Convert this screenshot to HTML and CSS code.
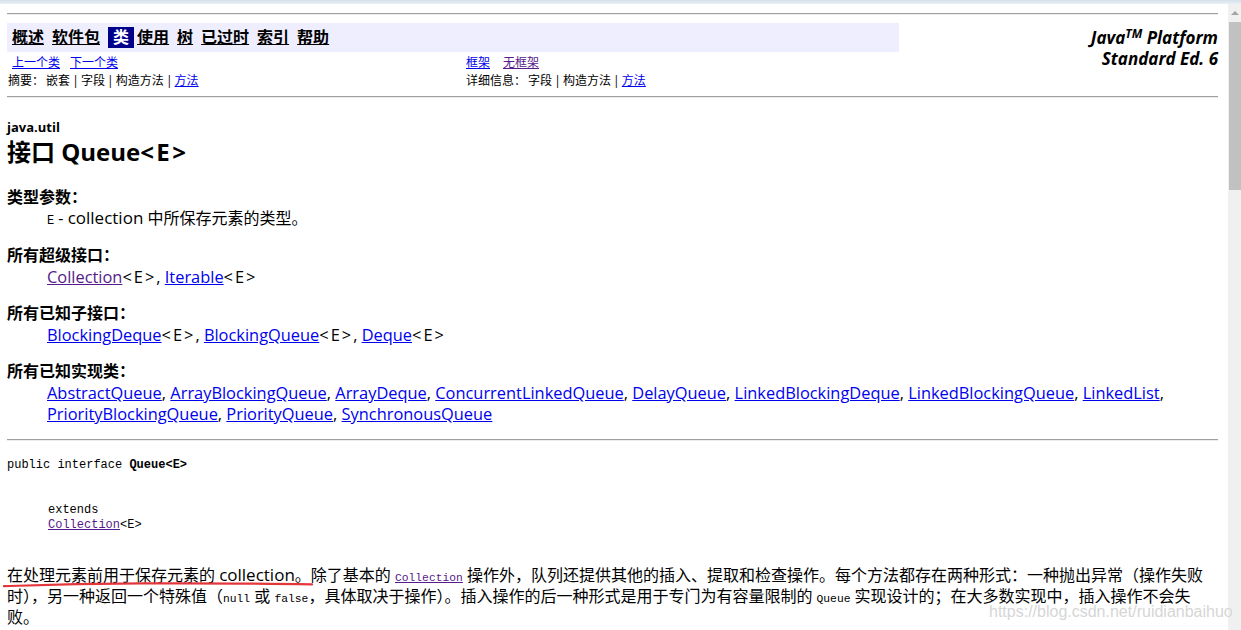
FILE: index.html
```html
<!DOCTYPE html>
<html lang="zh-CN">
<head>
<meta charset="utf-8">
<title>Queue (Java Platform SE 6)</title>
<link rel="stylesheet" href="styles.css">
</head>
<body>
<div class="window-top"></div>
<div class="window">
  <main class="doc">
    <hr class="rule rule-top">
    <header class="header">
      <div class="header-main">
        <nav class="navbar">
          <a class="nav-item" href="#">概述</a>
          <a class="nav-item" href="#">软件包</a>
          <span class="nav-item nav-current">类</span>
          <a class="nav-item" href="#">使用</a>
          <a class="nav-item" href="#">树</a>
          <a class="nav-item" href="#">已过时</a>
          <a class="nav-item" href="#">索引</a>
          <a class="nav-item" href="#">帮助</a>
        </nav>
        <div class="subnav">
          <div class="subnav-cell subnav-prevnext"><a href="#">上一个类</a><a href="#">下一个类</a></div>
          <div class="subnav-cell subnav-frames"><a href="#">框架</a><a class="visited" href="#">无框架</a></div>
          <div class="subnav-cell subnav-summary">摘要： 嵌套 | 字段 | 构造方法 | <a href="#">方法</a></div>
          <div class="subnav-cell">详细信息： 字段 | 构造方法 | <a href="#">方法</a></div>
        </div>
      </div>
      <div class="brand">Java<sup>TM</sup> Platform<br>Standard Ed. 6</div>
    </header>
    <hr class="rule rule-header">

    <div class="pkg">java.util</div>
    <h2 class="title">接口 Queue<span class="tp">&lt;E&gt;</span></h2>

    <dl class="meta meta-first">
      <dt>类型参数：</dt>
      <dd><code class="code">E</code> - <span class="lat">collection</span> 中所保存元素的类型。</dd>
    </dl>
    <dl class="meta">
      <dt>所有超级接口：</dt>
      <dd class="links"><a class="visited" href="#">Collection</a><span class="tp">&lt;E&gt;</span>, <a href="#">Iterable</a><span class="tp">&lt;E&gt;</span></dd>
    </dl>
    <dl class="meta">
      <dt>所有已知子接口：</dt>
      <dd class="links"><a href="#">BlockingDeque</a><span class="tp">&lt;E&gt;</span>, <a href="#">BlockingQueue</a><span class="tp">&lt;E&gt;</span>, <a href="#">Deque</a><span class="tp">&lt;E&gt;</span></dd>
    </dl>
    <dl class="meta">
      <dt>所有已知实现类：</dt>
      <dd class="links"><a href="#">AbstractQueue</a>, <a href="#">ArrayBlockingQueue</a>, <a href="#">ArrayDeque</a>, <a href="#">ConcurrentLinkedQueue</a>, <a href="#">DelayQueue</a>, <a href="#">LinkedBlockingDeque</a>, <a href="#">LinkedBlockingQueue</a>, <a href="#">LinkedList</a>, <a href="#">PriorityBlockingQueue</a>, <a href="#">PriorityQueue</a>, <a href="#">SynchronousQueue</a></dd>
    </dl>
    <hr class="rule rule-body">

    <div class="signature">
      <div>public interface <b>Queue&lt;E&gt;</b></div>
      <div class="extends">
        <div>extends</div>
        <div><a class="visited" href="#">Collection</a>&lt;E&gt;</div>
      </div>
    </div>

    <p class="desc">在处理元素前用于保存元素的 <span class="lat">collection</span>。除了基本的 <a class="visited code-inline" href="#">Collection</a> 操作外，队列还提供其他的插入、提取和检查操作。每个方法都存在两种形式：一种抛出异常（操作失败时），另一种返回一个特殊值（<code class="code-inline">null</code> 或 <code class="code-inline">false</code>，具体取决于操作）。插入操作的后一种形式是用于专门为有容量限制的 <code class="code-inline">Queue</code> 实现设计的；在大多数实现中，插入操作不会失败。</p>
  </main>
  <div class="scrollbar">
    <div class="scroll-arrow"><span class="arrow-up"></span></div>
    <div class="scroll-thumb"></div>
  </div>
</div>
<svg class="markup" width="322" height="10" viewBox="0 0 322 10" aria-hidden="true">
  <path d="M2 6.2 C 30 5.2, 70 3.6, 140 3.4 S 270 3.6, 310 4.4" fill="none" stroke="#e3363b" stroke-width="2.2" stroke-linecap="round"/>
</svg>
<div class="watermark">https://blog.csdn.net/ruidianbaihuo</div>
</body>
</html>
```

FILE: styles.css
```css
html, body {
  margin: 0;
  padding: 0;
}

body {
  width: 1241px;
  height: 630px;
  overflow: hidden;
  position: relative;
  display: flex;
  flex-direction: column;
  background: #ffffff;
  color: #000000;
  font-family: "Open Sans", "Noto Sans CJK SC", sans-serif;
  font-size: 16px;
}

a {
  color: #0000ee;
}

a.visited {
  color: #551a8b;
}

.window-top {
  flex: none;
  height: 4px;
  background: linear-gradient(#d3e0ea, #e9f0f6);
}

.window {
  flex: 1;
  min-height: 0;
  display: flex;
}

.doc {
  flex: 1;
  min-width: 0;
  padding: 0 10px 0 7px;
  overflow: hidden;
}

/* rules */
.rule {
  height: 0;
  margin: 0;
  border: 0;
  border-top: 1px solid #a0a0a0;
  border-bottom: 1px solid #ececec;
}

.rule-top {
  margin-top: 9px;
}

.rule-header {
  margin-top: 6px;
}

.rule-body {
  margin-top: 15px;
}

/* header */
.header {
  display: flex;
  margin-top: 8px;
}

.header-main {
  width: 892px;
  flex: none;
}

.navbar {
  height: 29px;
  display: flex;
  align-items: center;
  padding-left: 5px;
  background: #eeeeff;
}

.nav-item {
  margin-right: 8px;
  font-weight: bold;
  font-size: 16px;
  line-height: 21px;
  color: #000000;
  text-decoration: underline;
}

.nav-current {
  margin-right: 3px;
  padding: 0 5px;
  background: #00008b;
  color: #ffffff;
  text-decoration: none;
}

.subnav {
  display: grid;
  grid-template-columns: 459px 1fr;
  padding-top: 2px;
  font-size: 12px;
  line-height: 18px;
  word-spacing: -1px;
}

.subnav-cell {
  white-space: nowrap;
}

.subnav-prevnext {
  padding-left: 5px;
  display: flex;
  gap: 10px;
}

.subnav-frames {
  display: flex;
  gap: 13px;
}

.subnav-summary {
  padding-left: 1px;
}

.brand {
  flex: 1;
  padding-top: 4px;
  text-align: right;
  font-family: "Open Sans", sans-serif;
  font-weight: bold;
  font-style: italic;
  font-size: 17px;
  line-height: 21px;
}

.brand sup {
  font-size: 12px;
  line-height: 0;
  vertical-align: 6px;
}

/* title */
.pkg {
  margin-top: 21px;
  font-size: 13px;
  font-weight: bold;
  line-height: 16px;
}

.title {
  margin: 2px 0 0;
  font-size: 24px;
  font-weight: bold;
  line-height: 30px;
}

.title .tp {
  letter-spacing: 2.4px;
}

.meta {
  margin: 16px 0 0;
  line-height: 21px;
}

.meta-first {
  margin-top: 20px;
}

.meta dt {
  font-weight: bold;
}

.meta dd {
  margin-left: 40px;
}

.links {
  font-size: 16.4px;
}

.tp {
  letter-spacing: 2px;
}

.code {
  font-family: "Liberation Mono", monospace;
  font-size: 12px;
  line-height: 1;
}

/* signature */
.signature {
  margin-top: 17px;
  font-family: "Liberation Mono", monospace;
  font-size: 12px;
  line-height: 15px;
}

.extends {
  margin-top: 30px;
  padding-left: 41px;
}

/* description */
.desc {
  margin: 32px 0 0;
  line-height: 21px;
}

.lat {
  font-size: 17px;
  line-height: 1;
}

.code-inline {
  font-family: "Liberation Mono", monospace;
  font-size: 11.3px;
  line-height: 1;
}

/* scrollbar */
.scrollbar {
  flex: none;
  width: 13px;
  background: #f0f0f0;
  display: flex;
  flex-direction: column;
}

.scroll-arrow {
  height: 17px;
  display: flex;
  align-items: center;
  justify-content: center;
}

.arrow-up {
  width: 0;
  height: 0;
  border-left: 4px solid transparent;
  border-right: 4px solid transparent;
  border-bottom: 4px solid #a3a3a3;
}

.scroll-thumb {
  margin: 1px 0 0 1px;
  height: 168px;
  background: #c1c1c1;
}

/* overlays */
.markup {
  position: absolute;
  left: 2px;
  top: 580px;
}

.watermark {
  position: absolute;
  left: 989px;
  top: 603px;
  font-family: "Liberation Sans", sans-serif;
  font-size: 16px;
  line-height: 18px;
  color: #d6d6d6;
  text-shadow: 0 0 1px #ffffff;
  white-space: nowrap;
}
```
